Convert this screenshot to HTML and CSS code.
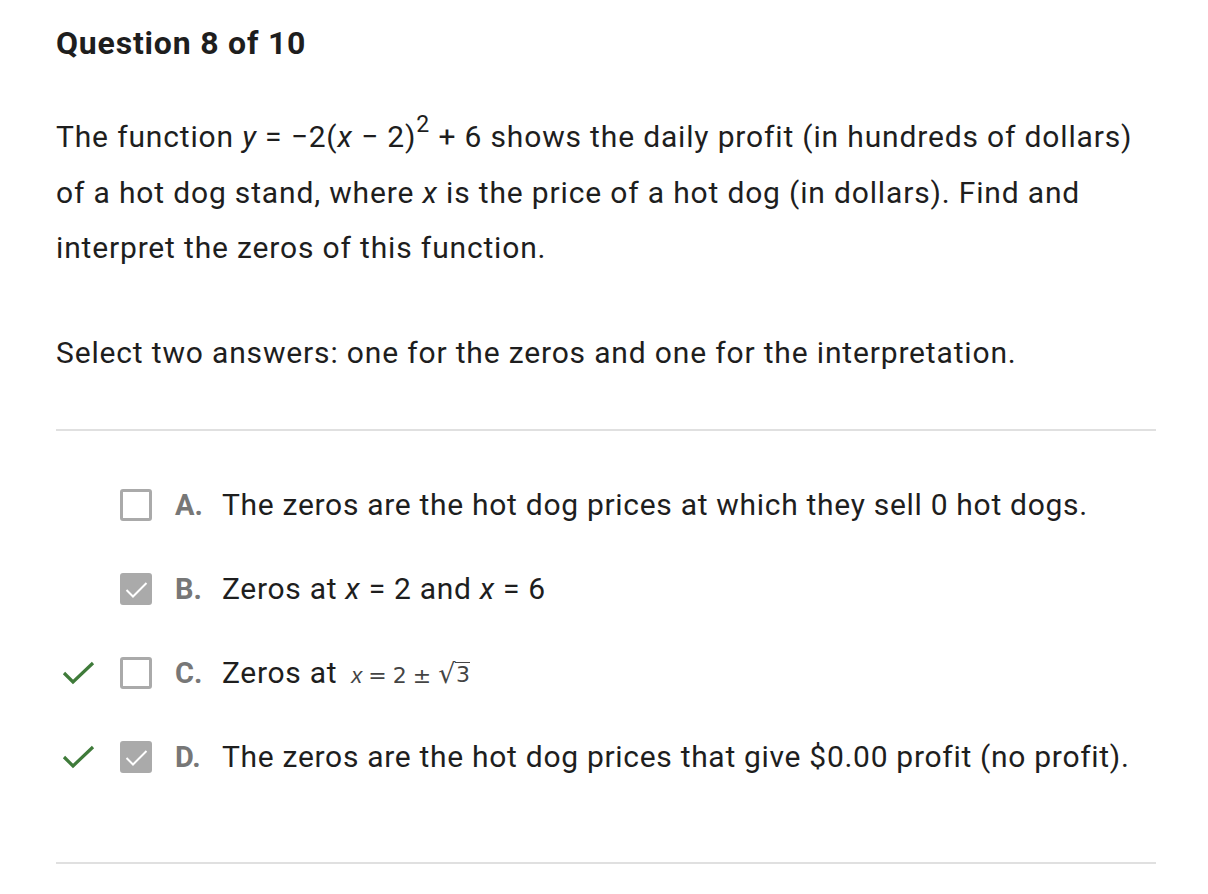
FILE: index.html
```html
<!DOCTYPE html>
<html>
<head>
<meta charset="utf-8">
<link rel="stylesheet" href="styles.css">
</head>
<body>
<main class="page">
  <h1 class="title">Question 8 of 10</h1>
  <p class="prompt">The function <i>y</i> = −2(<i>x</i> − 2)<sup>2</sup> + 6 shows the daily profit (in hundreds of dollars) of a hot dog stand, where <i>x</i> is the price of a hot dog (in dollars). Find and interpret the zeros of this function.</p>
  <p class="instruction">Select two answers: one for the zeros and one for the interpretation.</p>
  <hr class="rule rule-top">
  <ul class="options">
    <li class="option">
      <span class="mark"></span>
      <span class="box"></span>
      <span class="letter">A.</span>
      <span class="text">The zeros are the hot dog prices at which they sell 0 hot dogs.</span>
    </li>
    <li class="option">
      <span class="mark"></span>
      <span class="box checked"><svg viewBox="0 0 32 32" width="32" height="32"><path d="M6.5 17 L13 23.5 L26.5 10" fill="none" stroke="#fff" stroke-width="2"/></svg></span>
      <span class="letter">B.</span>
      <span class="text">Zeros at <i>x</i> = 2 and <i>x</i> = 6</span>
    </li>
    <li class="option">
      <span class="mark"><svg viewBox="0 0 34 26" width="34" height="26"><path d="M2 13 L11 22 L31 3" fill="none" stroke="#3f7b3a" stroke-width="3.2"/></svg></span>
      <span class="box"></span>
      <span class="letter">C.</span>
      <span class="text">Zeros at <span class="math"><span class="mx">x</span> = 2 ± <span class="sqrt"><span class="radical">√</span><span class="radicand">3</span></span></span></span>
    </li>
    <li class="option">
      <span class="mark"><svg viewBox="0 0 34 26" width="34" height="26"><path d="M2 13 L11 22 L31 3" fill="none" stroke="#3f7b3a" stroke-width="3.2"/></svg></span>
      <span class="box checked"><svg viewBox="0 0 32 32" width="32" height="32"><path d="M6.5 17 L13 23.5 L26.5 10" fill="none" stroke="#fff" stroke-width="2"/></svg></span>
      <span class="letter">D.</span>
      <span class="text">The zeros are the hot dog prices that give $0.00 profit (no profit).</span>
    </li>
  </ul>
  <hr class="rule">
</main>
</body>
</html>
```

FILE: styles.css
```css
html, body {
  margin: 0;
  padding: 0;
  background: #ffffff;
}

body {
  font-family: Roboto, "Liberation Sans", sans-serif;
  color: #1e1e1e;
}

.page {
  width: 1100px;
  padding: 22px 0 0 56px;
}

.title {
  margin: 0;
  font-size: 32px;
  font-weight: 700;
  letter-spacing: 0.8px;
  line-height: 42px;
  color: #1e1e1e;
}

.prompt {
  margin: 45px 0 0;
  font-size: 30px;
  letter-spacing: 0.84px;
  line-height: 55.5px;
}

.prompt sup {
  font-size: 23px;
  line-height: 0;
  vertical-align: 15px;
}

.instruction {
  margin: 49px 0 0;
  font-size: 30px;
  letter-spacing: 0.84px;
  line-height: 56px;
}

.rule {
  margin: 0;
  border: 0;
  height: 2px;
  background: #e0e0e0;
}

.rule-top {
  margin-top: 48px;
}

.options {
  list-style: none;
  margin: 0;
  padding: 57px 0 88px;
  display: flex;
  flex-direction: column;
  gap: 50px;
}

.option {
  display: flex;
  align-items: center;
  height: 34px;
}

.mark {
  width: 64px;
  display: flex;
  align-items: center;
  padding-left: 6px;
  box-sizing: border-box;
}

.box {
  width: 32px;
  height: 32px;
  box-sizing: border-box;
  border: 3px solid #aaaaaa;
  border-radius: 3px;
  margin-right: 23px;
  flex: none;
  position: relative;
}

.box.checked {
  background: #aaaaaa;
}

.box svg {
  position: absolute;
  left: -3px;
  top: -3px;
}

.letter {
  width: 47px;
  flex: none;
  font-size: 29px;
  font-weight: 700;
  color: #777777;
}

.text {
  font-size: 30px;
  letter-spacing: 0.7px;
  color: #1e1e1e;
  white-space: nowrap;
}

.math {
  font-family: "DejaVu Sans", sans-serif;
  font-size: 22px;
  letter-spacing: -0.5px;
  color: #444444;
  margin-left: 6px;
}

.mx {
  font-style: italic;
  font-family: "Liberation Sans", sans-serif;
}

.sqrt {
  display: inline-flex;
  align-items: flex-end;
  margin-left: 1px;
}

.radical {
  font-size: 27px;
  line-height: 1;
}

.radicand {
  border-top: 1.5px solid #444444;
  padding: 0 1px;
  line-height: 1.1;
}
```
